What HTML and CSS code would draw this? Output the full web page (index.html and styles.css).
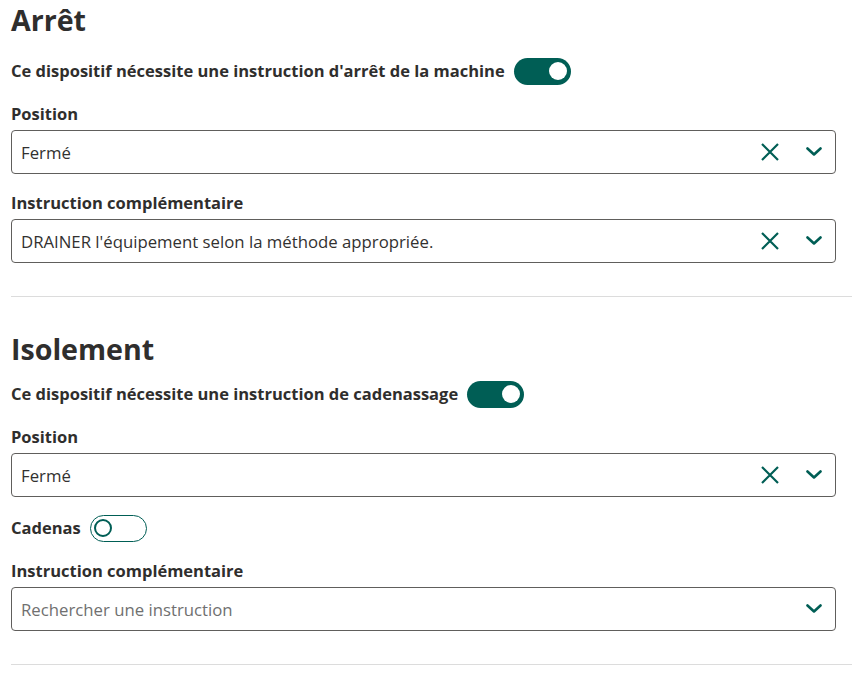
FILE: index.html
```html
<!DOCTYPE html>
<html lang="fr">
<head>
<meta charset="utf-8">
<link rel="stylesheet" href="styles.css">
</head>
<body>
<div class="page">
  <section class="section section-first">
    <h2 class="title">Arrêt</h2>
    <div class="switch-row switch-row-first">
      <span class="label">Ce dispositif nécessite une instruction d'arrêt de la machine</span>
      <span class="toggle on"><span class="knob"></span></span>
    </div>
    <div class="field">
      <div class="label">Position</div>
      <div class="select">
        <span class="value">Fermé</span>
        <span class="icons">
          <svg class="ico-x" viewBox="0 0 18 18" width="18" height="18"><path d="M1 1 L17 17 M17 1 L1 17" stroke="#005e55" stroke-width="2.2" fill="none"/></svg>
          <svg class="ico-chev" viewBox="0 0 16 9" width="16" height="9"><path d="M1.5 1.5 L8 7.5 L14.5 1.5" stroke="#005e55" stroke-width="2.6" fill="none" stroke-linecap="round" stroke-linejoin="round"/></svg>
        </span>
      </div>
    </div>
    <div class="field">
      <div class="label">Instruction complémentaire</div>
      <div class="select">
        <span class="value">DRAINER l'équipement selon la méthode appropriée.</span>
        <span class="icons">
          <svg class="ico-x" viewBox="0 0 18 18" width="18" height="18"><path d="M1 1 L17 17 M17 1 L1 17" stroke="#005e55" stroke-width="2.2" fill="none"/></svg>
          <svg class="ico-chev" viewBox="0 0 16 9" width="16" height="9"><path d="M1.5 1.5 L8 7.5 L14.5 1.5" stroke="#005e55" stroke-width="2.6" fill="none" stroke-linecap="round" stroke-linejoin="round"/></svg>
        </span>
      </div>
    </div>
  </section>
  <section class="section">
    <h2 class="title">Isolement</h2>
    <div class="switch-row">
      <span class="label">Ce dispositif nécessite une instruction de cadenassage</span>
      <span class="toggle on"><span class="knob"></span></span>
    </div>
    <div class="field">
      <div class="label">Position</div>
      <div class="select">
        <span class="value">Fermé</span>
        <span class="icons">
          <svg class="ico-x" viewBox="0 0 18 18" width="18" height="18"><path d="M1 1 L17 17 M17 1 L1 17" stroke="#005e55" stroke-width="2.2" fill="none"/></svg>
          <svg class="ico-chev" viewBox="0 0 16 9" width="16" height="9"><path d="M1.5 1.5 L8 7.5 L14.5 1.5" stroke="#005e55" stroke-width="2.6" fill="none" stroke-linecap="round" stroke-linejoin="round"/></svg>
        </span>
      </div>
    </div>
    <div class="switch-row switch-row-field">
      <span class="label">Cadenas</span>
      <span class="toggle off"><span class="knob"></span></span>
    </div>
    <div class="field">
      <div class="label">Instruction complémentaire</div>
      <div class="select">
        <span class="value placeholder">Rechercher une instruction</span>
        <span class="icons">
          <svg class="ico-chev" viewBox="0 0 16 9" width="16" height="9"><path d="M1.5 1.5 L8 7.5 L14.5 1.5" stroke="#005e55" stroke-width="2.6" fill="none" stroke-linecap="round" stroke-linejoin="round"/></svg>
        </span>
      </div>
    </div>
  </section>
</div>
</body>
</html>
```
FILE: styles.css
```css
* { box-sizing: border-box; }
html, body { margin: 0; padding: 0; background: #fff; }
body {
  font-family: "Open Sans", "Noto Sans", sans-serif;
  color: #2f2e2d;
}
.page {
  padding-left: 11px;
}
.section {
  display: flex;
  flex-direction: column;
  padding-bottom: 33px;
  border-bottom: 1px solid #dcdcdc;
  margin-bottom: 32px;
}
.title {
  margin: 0;
  font-size: 28.6px;
  line-height: 40px;
  font-weight: 700;
  padding-right: 16px;
}
.switch-row {
  display: flex;
  align-items: center;
  gap: 9px;
  height: 28px;
  margin-top: 11px;
}
.switch-row-first { margin-top: 17px; }
.switch-row-field { margin-top: 17px; }
.label {
  font-size: 16.5px;
  line-height: 22px;
  font-weight: 700;
}
.field {
  display: flex;
  flex-direction: column;
  gap: 5px;
  margin-top: 18px;
  padding-right: 16px;
}
.select {
  height: 44px;
  border: 1px solid #605e5c;
  border-radius: 4px;
  display: flex;
  align-items: center;
  padding: 0 13px 0 9px;
}
.value {
  flex: 1;
  font-size: 16.75px;
  color: #323130;
}
.placeholder { color: #707070; }
.icons {
  display: flex;
  align-items: center;
  gap: 27px;
}
.ico-chev { margin-top: -1px; }
.toggle {
  position: relative;
  width: 57px;
  height: 27px;
  border-radius: 14px;
  flex: none;
}
.toggle.on { background: #005e55; }
.toggle.off { border: 1px solid #005e55; background: #fff; }
.knob {
  position: absolute;
  top: 4.5px;
  width: 18px;
  height: 18px;
  border-radius: 50%;
}
.toggle.on .knob { right: 4px; background: #fff; }
.toggle.off .knob { left: 3px; top: 3.5px; border: 2.5px solid #005e55; background: #fff; }
```
